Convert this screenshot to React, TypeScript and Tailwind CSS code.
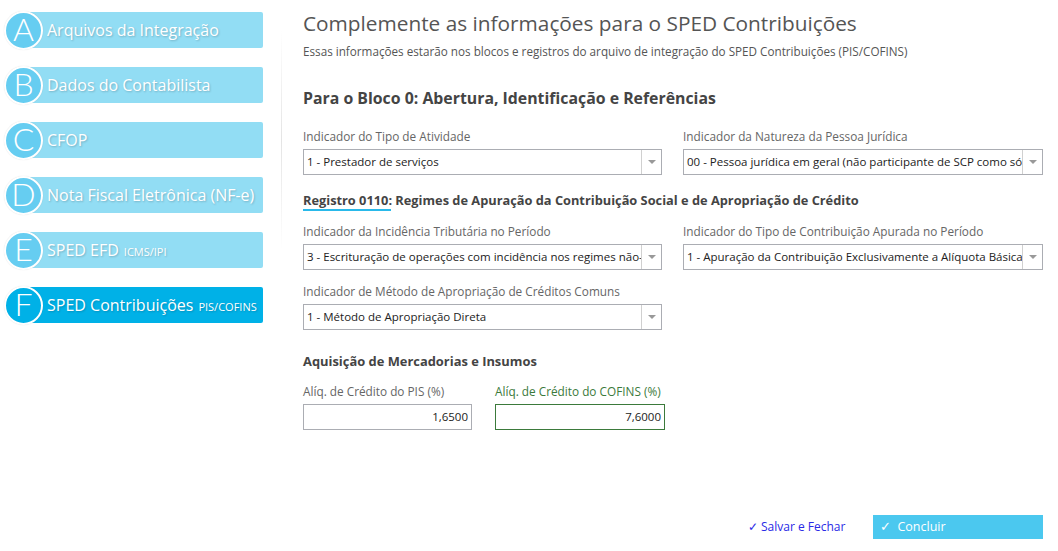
import React from "react";

const steps = [
  { l: "A", t: "Arquivos da Integração", s: "" },
  { l: "B", t: "Dados do Contabilista", s: "" },
  { l: "C", t: "CFOP", s: "" },
  { l: "D", t: "Nota Fiscal Eletrônica (NF-e)", s: "" },
  { l: "E", t: "SPED EFD", s: "ICMS/IPI" },
  { l: "F", t: "SPED Contribuições", s: "PIS/COFINS", active: true },
];

function Step({ l, t, s, active }: { l: string; t: string; s: string; active?: boolean }) {
  return (
    <div className="relative h-[40px] flex items-center">
      <div
        className={`absolute left-[24px] top-[2px] h-[36px] w-[239px] rounded-[2px] ${
          active ? "bg-[#00b1e7]" : "bg-[#92ddf4]"
        }`}
      />
      <div
        className={`relative ml-[4px] w-[39px] h-[39px] rounded-full border-[2px] border-white flex items-center justify-center text-white text-[32px] leading-none font-light ${
          active ? "bg-[#00b1e7]" : "bg-[#66cdf1]"
        }`}
        style={{ fontFamily: "Lato, sans-serif", boxShadow: "0 0 1px rgba(0,0,0,0.15)" }}
      >
        <span className="-mt-[2px]">{l}</span>
      </div>
      <div
        className="relative ml-[4px] text-white text-[16px] whitespace-nowrap"
        style={{ fontFamily: "'Open Sans', sans-serif", textShadow: "1px 1px 2px rgba(0,0,0,0.2)" }}
      >
        {t}
        {s && <span className="text-[11px] ml-[5px]">{s}</span>}
      </div>
    </div>
  );
}

function Select({ value, w }: { value: string; w: string }) {
  return (
    <div className={`${w} h-[26px] border border-[#abadb3] flex items-stretch bg-white`}>
      <div className="flex-1 overflow-hidden whitespace-nowrap text-[11.5px] text-[#222] pl-[3px] leading-[24px]">
        {value}
      </div>
      <div className="w-[20px] border-l border-[#d0d0d0] flex items-center justify-center">
        <div className="w-0 h-0 border-l-[4px] border-r-[4px] border-t-[4px] border-l-transparent border-r-transparent border-t-[#999]" />
      </div>
    </div>
  );
}

function Label({ children }: { children: React.ReactNode }) {
  return <div className="text-[11.8px] text-[#666] leading-[18px] mb-[4px] whitespace-nowrap">{children}</div>;
}

export default function App() {
  return (
    <div
      className="w-[1058px] h-[551px] bg-white relative overflow-hidden flex"
      style={{ fontFamily: "'Open Sans', sans-serif" }}
    >
      <div className="w-[281px] pt-[10px] flex flex-col gap-[15px]">
        {steps.map((st) => (
          <Step key={st.l} {...st} />
        ))}
      </div>
      <div className="w-px mt-[30px] h-[220px] bg-gradient-to-b from-[#ffffff] via-[#e4e4e4] to-[#ffffff]" />
      <div className="flex-1 pl-[21px] pt-[9px] relative">
        <h1 className="text-[20.8px] text-[#555] leading-[28px] whitespace-nowrap">
          Complemente as informações para o SPED Contribuições
        </h1>
        <p className="text-[11.7px] text-[#555] mt-[6px] leading-[16px] whitespace-nowrap">
          Essas informações estarão nos blocos e registros do arquivo de integração do SPED Contribuições (PIS/COFINS)
        </p>
        <h2 className="text-[15.85px] font-bold text-[#444] mt-[28px] leading-[22px] whitespace-nowrap">
          Para o Bloco 0: Abertura, Identificação e Referências
        </h2>
        <div className="flex gap-[21px] mt-[18px]">
          <div>
            <Label>Indicador do Tipo de Atividade</Label>
            <Select w="w-[359px]" value="1 - Prestador de serviços" />
          </div>
          <div>
            <Label>Indicador da Natureza da Pessoa Jurídica</Label>
            <Select w="w-[360px]" value="00 - Pessoa jurídica em geral (não participante de SCP como sócia ostensiva)" />
          </div>
        </div>
        <div className="mt-[12px]">
          <span className="inline-block text-[12.8px] font-bold text-[#444] leading-[18px] relative whitespace-nowrap">
            Registro 0110: Regimes de Apuração da Contribuição Social e de Apropriação de Crédito
            <span className="absolute left-0 top-[18px] w-[88px] h-[2px] bg-[#29b9ea]" />
          </span>
        </div>
        <div className="flex gap-[21px] mt-[11px]">
          <div>
            <Label>Indicador da Incidência Tributária no Período</Label>
            <Select w="w-[359px]" value="3 - Escrituração de operações com incidência nos regimes não-cumulativo e cumulativo" />
          </div>
          <div>
            <Label>Indicador do Tipo de Contribuição Apurada no Período</Label>
            <Select w="w-[360px]" value="1 - Apuração da Contribuição Exclusivamente a Alíquota Básica" />
          </div>
        </div>
        <div className="mt-[12px]">
          <Label>Indicador de Método de Apropriação de Créditos Comuns</Label>
          <Select w="w-[359px]" value="1 - Método de Apropriação Direta" />
        </div>
        <h3 className="text-[12.9px] font-bold text-[#444] mt-[22px] leading-[18px] whitespace-nowrap">
          Aquisição de Mercadorias e Insumos
        </h3>
        <div className="flex gap-[23px] mt-[12px]">
          <div>
            <Label>Alíq. de Crédito do PIS (%)</Label>
            <div className="w-[169px] h-[26px] border border-[#abadb3] text-right pr-[3px] text-[11.5px] text-[#222] leading-[24px]">
              1,6500
            </div>
          </div>
          <div>
            <Label><span className="text-[#3b7a3b]">Alíq. de Crédito do COFINS (%)</span></Label>
            <div className="w-[170px] h-[26px] border border-[#3b7a3b] text-right pr-[3px] text-[11.5px] text-[#222] leading-[24px]">
              7,6000
            </div>
          </div>
        </div>
        <div className="absolute left-[466px] top-[515px] flex items-center gap-[28px]">
          <a className="text-[12px] text-[#2a2ae6] flex items-center gap-[3px] leading-[24px]">
            <span className="text-[12px]">✓</span>Salvar e Fechar
          </a>
          <div className="w-[170px] h-[24px] bg-[#4bc8ef] text-white text-[12.5px] flex items-center pl-[7px] gap-[6px]">
            <span>✓</span>Concluir
          </div>
        </div>
      </div>
    </div>
  );
}
